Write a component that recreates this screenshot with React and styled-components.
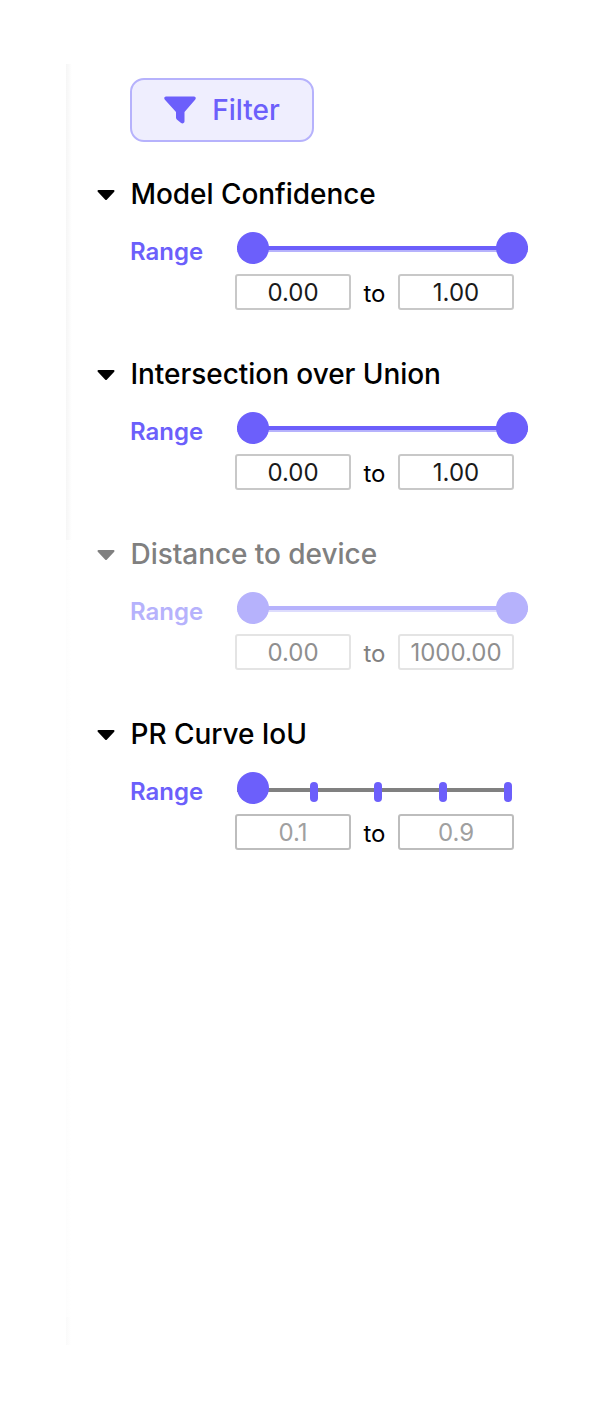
import React from "react";
import styled, { createGlobalStyle } from "styled-components";

const Global = createGlobalStyle`
  html, body { margin: 0; padding: 0; background: #fff; }
  body { font-family: Inter, "Liberation Sans", sans-serif; }
`;

const Page = styled.div`
  width: 592px;
  height: 1409px;
  padding: 64px 0 0 66px;
  box-sizing: border-box;
  overflow: hidden;
`;

const Panel = styled.div`
  width: 526px;
  height: 1281px;
  box-sizing: border-box;
  padding: 14px 0 0 30px;
  background:
    linear-gradient(90deg, #f6f6f6 0, #fafafa 3px, #fff 6px) left top / 7px 476px no-repeat,
    linear-gradient(90deg, #fafafa 0, #fff 5px) left bottom / 6px 28px no-repeat,
    linear-gradient(90deg, #fdfdfd 0, #fff 5px) left top / 6px 100% no-repeat;
`;

const FilterButton = styled.button`
  display: flex;
  align-items: center;
  justify-content: center;
  gap: 16px;
  width: 184px;
  height: 64px;
  margin: 0 0 34px 34px;
  padding: 0;
  box-sizing: border-box;
  border: 2px solid #b6b2fc;
  border-radius: 14px;
  background: #efeefe;
  color: #6c5ffb;
  font: 500 28px/34px Inter, sans-serif;
`;

const Section = styled.section`
  height: 180px;
  color: ${(p) => (p.$dim ? "#808080" : "#000")};
`;

const Header = styled.div`
  display: flex;
  align-items: center;
  gap: 14.5px;
  height: 36px;
`;

const CaretIcon = styled.svg`
  flex: none;
  margin-top: 2px;
`;

const Title = styled.h3`
  margin: 0;
  font: 500 28px/36px Inter, sans-serif;
  letter-spacing: -0.05px;
`;

const Body = styled.div`
  display: grid;
  grid-template-columns: 105px 1fr;
  padding: 20px 0 0 34px;
`;

const Label = styled.span`
  font: 600 24px/32px Inter, sans-serif;
  color: ${(p) => (p.$dim ? "#b6b2fc" : "#6c5ffb")};
  padding-top: 4px;
`;

const Controls = styled.div`
  display: flex;
  flex-direction: column;
  gap: 10px;
`;

const Track = styled.div`
  display: flex;
  align-items: center;
  justify-content: space-between;
  width: 291px;
  height: 32px;
  margin-left: 2px;
  background: linear-gradient(
    ${(p) => p.$fill} 0 4px,
    ${(p) => p.$edge} 4px 6px
  ) 0 14px / 100% 6px no-repeat;
`;

const TickTrack = styled.div`
  display: flex;
  align-items: center;
  gap: 56.7px;
  width: 275px;
  height: 32px;
  margin-left: 2px;
  background: linear-gradient(#808080, #808080) 0 16px / 100% 4px no-repeat;
`;

const Thumb = styled.span`
  width: 32px;
  height: 32px;
  border-radius: 50%;
  background: ${(p) => p.$color};
`;

const TickThumb = styled(Thumb)`
  margin-right: -16px;
`;

const Tick = styled.span`
  flex: none;
  width: 8px;
  height: 20px;
  margin-top: 8px;
  border-radius: 4px;
  background: #6c5ffb;
`;

const Inputs = styled.div`
  display: flex;
  align-items: center;
  height: 36px;
  color: ${(p) => (p.$dim ? "#808080" : "#000")};
`;

const boxBorder = { dim: "#e4e4e4", placeholder: "#bdbdbd", value: "#c8c8c8" };
const boxText = { dim: "#8f8f8f", placeholder: "#a0a0a0", value: "#1a1a1a" };

const Box = styled.div`
  width: 116px;
  height: 36px;
  box-sizing: border-box;
  padding-top: 1px;
  border: 2px solid ${(p) => boxBorder[p.$tone]};
  border-radius: 3px;
  text-align: center;
  font: 400 24px/31px Inter, sans-serif;
  color: ${(p) => boxText[p.$tone]};
`;

const To = styled.span`
  width: 47px;
  height: 36px;
  text-align: center;
  font: 400 24px/40px Inter, sans-serif;
`;

const Caret = () => (
  <CaretIcon width="20" height="12" viewBox="0 0 20 12" aria-hidden="true">
    <polygon
      points="2.500,2 17.500,2 10,10"
      fill="currentColor"
      stroke="currentColor"
      strokeWidth="2"
      strokeLinejoin="round"
    />
  </CaretIcon>
);

const Funnel = () => (
  <svg width="32" height="28" viewBox="0 0 32 28" aria-hidden="true">
    <path
      d="M2 0.500h28c1.500 0 2.300 1.700 1.300 2.900L20.500 16v9.300c0 1.800-2 2.800-3.400 1.700l-3.700-2.900c-.9-.7-1.400-1.500-1.400-2.500V16L.7 3.400C-.3 2.200.5.500 2 .500z"
      fill="#6c5ffb"
    />
  </svg>
);

const accent = "#6c5ffb";
const light = "#b6b2fc";

const RangeSection = ({ title, from, to, dim }) => {
  const tone = dim ? "dim" : "value";
  return (
    <Section $dim={dim}>
      <Header>
        <Caret />
        <Title>{title}</Title>
      </Header>
      <Body>
        <Label $dim={dim}>Range</Label>
        <Controls>
          <Track $fill={dim ? light : accent} $edge={dim ? "#dddcfd" : light}>
            <Thumb $color={dim ? light : accent} />
            <Thumb $color={dim ? light : accent} />
          </Track>
          <Inputs $dim={dim}>
            <Box $tone={tone}>{from}</Box>
            <To>to</To>
            <Box $tone={tone}>{to}</Box>
          </Inputs>
        </Controls>
      </Body>
    </Section>
  );
};

const TickSection = ({ title, from, to }) => (
  <Section>
    <Header>
      <Caret />
      <Title>{title}</Title>
    </Header>
    <Body>
      <Label>Range</Label>
      <Controls>
        <TickTrack>
          <TickThumb $color={accent} />
          <Tick />
          <Tick />
          <Tick />
          <Tick />
        </TickTrack>
        <Inputs>
          <Box $tone="placeholder">{from}</Box>
          <To>to</To>
          <Box $tone="placeholder">{to}</Box>
        </Inputs>
      </Controls>
    </Body>
  </Section>
);

export default function App() {
  return (
    <Page>
      <Global />
      <Panel>
        <FilterButton>
          <Funnel />
          Filter
        </FilterButton>
        <RangeSection title="Model Confidence" from="0.00" to="1.00" />
        <RangeSection title="Intersection over Union" from="0.00" to="1.00" />
        <RangeSection title="Distance to device" from="0.00" to="1000.00" dim />
        <TickSection title="PR Curve IoU" from="0.1" to="0.9" />
      </Panel>
    </Page>
  );
}
